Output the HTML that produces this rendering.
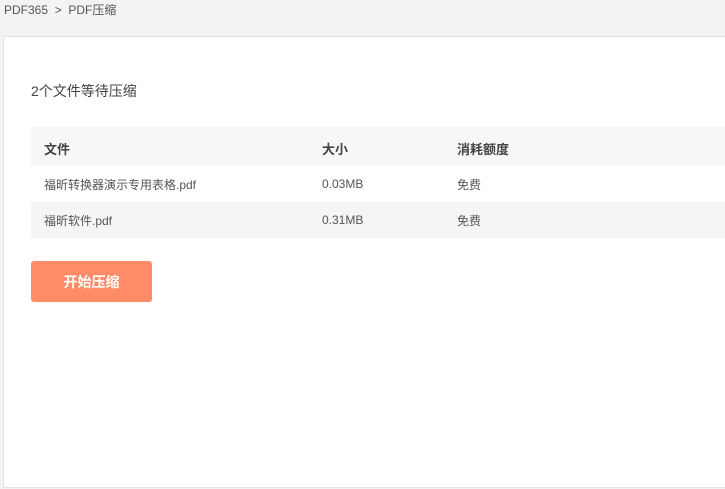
<!DOCTYPE html>
<html><head><meta charset="utf-8"><style>
body{margin:0;width:725px;height:489px;background:#f3f3f3;font-family:"Liberation Sans","Noto Sans CJK SC",sans-serif;color:#555;overflow:hidden;position:relative}
.bc{position:absolute;left:4px;top:1px;font-size:12px;color:#555}
.card{position:absolute;left:3px;top:36px;width:740px;height:450px;background:#fff;border:1px solid #e2e2e2}
.t{position:absolute;left:31px;top:81px;font-size:14px;color:#444}
.row{position:absolute;left:31px;width:700px;font-size:12px;color:#555}
.row span{position:absolute}
.h{top:127px;height:39px;background:#f7f7f7;font-size:13px;font-weight:bold;color:#444}
.r1{top:166px;height:36px;background:#fff}
.r2{top:202px;height:36px;background:#f5f5f5}
.btn{position:absolute;left:31px;top:261px;width:121px;height:41px;background:#ff8c66;border-radius:3px;color:#fff;font-size:14px;font-weight:bold;text-align:center;line-height:43px}
</style></head><body>
<div class="bc">PDF365 &nbsp;&gt;&nbsp; PDF压缩</div>
<div class="card"></div>
<div class="t">2个文件等待压缩</div>
<div class="row h"><span style="left:13px;top:12px">文件</span><span style="left:291px;top:12px">大小</span><span style="left:426px;top:12px">消耗额度</span></div>
<div class="row r1"><span style="left:13px;top:10px">福昕转换器演示专用表格.pdf</span><span style="left:291px;top:11px">0.03MB</span><span style="left:426px;top:10px">免费</span></div>
<div class="row r2"><span style="left:13px;top:10px">福昕软件.pdf</span><span style="left:291px;top:11px">0.31MB</span><span style="left:426px;top:10px">免费</span></div>
<div class="btn">开始压缩</div>
</body></html>
